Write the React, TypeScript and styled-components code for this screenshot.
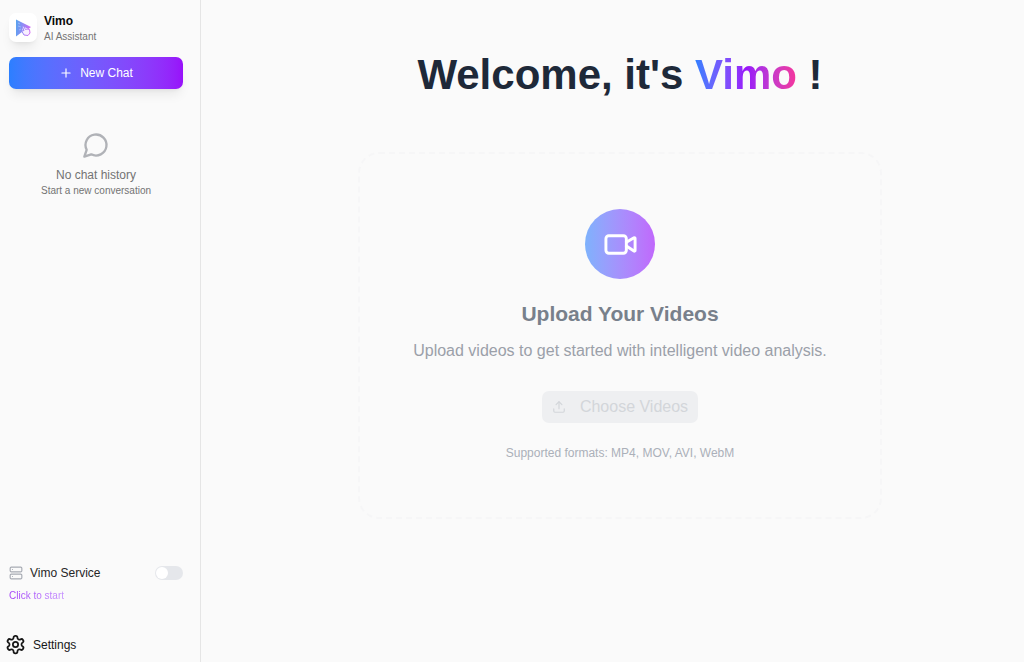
import React, { useState } from "react";
import styled, { createGlobalStyle } from "styled-components";
import { Plus, Server, Upload, Video } from "lucide-react";

const GlobalStyle = createGlobalStyle`
  * { box-sizing: border-box; }
  body {
    margin: 0;
    background: #fafafa;
    color: #0a0a0a;
    font-family: "Liberation Sans", Arial, sans-serif;
    font-size: 12px;
    line-height: 16px;
  }
  button { font: inherit; border: 0; cursor: pointer; }
  h1, h2, p { margin: 0; }
`;

const Shell = styled.div`
  display: flex;
  min-height: 100vh;
`;

const Sidebar = styled.aside`
  display: flex;
  flex-direction: column;
  flex: 0 0 201px;
  padding: 13px 17px 7px 9px;
  border-right: 1px solid #e5e5e5;
`;

const Brand = styled.div`
  display: flex;
  align-items: flex-start;
  gap: 7px;
`;

const LogoTile = styled.div`
  display: grid;
  place-items: center;
  width: 28px;
  height: 29px;
  border-radius: 7px;
  background: #fff;
  box-shadow: 0 8px 12px -3px rgba(0, 0, 0, 0.08), 0 3px 5px -3px rgba(0, 0, 0, 0.08);
`;

const BrandName = styled.p`
  font-weight: 700;
`;

const Caption = styled.p`
  color: #737373;
  font-size: 10px;
`;

const NewChatButton = styled.button`
  display: flex;
  align-items: center;
  justify-content: center;
  gap: 7px;
  height: 32px;
  margin-top: 12px;
  border-radius: 7px;
  color: #fff;
  background: linear-gradient(to right in oklab, #2b7fff, #9810fa);
  box-shadow: 0 8px 12px -3px rgba(0, 0, 0, 0.08), 0 3px 5px -3px rgba(0, 0, 0, 0.08);
`;

const EmptyHistory = styled.div`
  display: flex;
  flex: 1;
  flex-direction: column;
  align-items: center;
  padding-top: 42px;
  color: #737373;

  svg { margin-bottom: 8px; color: #b0b2b7; }
`;

const ServiceRow = styled.div`
  display: flex;
  align-items: center;
  gap: 7px;
  height: 20px;

  svg { color: #a7abb3; }
`;

const ServiceLabel = styled.label`
  flex: 1;
  color: #262626;
`;

const Toggle = styled.input`
  appearance: none;
  width: 28px;
  height: 14px;
  margin: 0;
  padding: 1px;
  border-radius: 7px;
  background: #e5e7eb;
  cursor: pointer;

  &::before {
    content: "";
    display: block;
    width: 12px;
    height: 12px;
    border-radius: 50%;
    background: #fff;
  }
  &:checked { background: #9810fa; }
  &:checked::before { margin-left: 14px; }
`;

const StartLink = styled.button`
  align-self: flex-start;
  margin-top: 6px;
  padding: 0;
  font-size: 10px;
  line-height: 14px;
  color: transparent;
  background: linear-gradient(to right, #a03cf7, #c794ff);
  background-clip: text;
`;

const SettingsButton = styled.button`
  display: flex;
  align-items: center;
  align-self: flex-start;
  gap: 7px;
  margin: 31px 0 0 -4px;
  padding: 0;
  color: #171717;
  background: none;
`;

const Main = styled.main`
  display: flex;
  flex: 1;
  flex-direction: column;
  align-items: center;
  gap: 51px;
  padding: 49px 16px 40px 31px;
`;

const Title = styled.h1`
  color: #1e2939;
  font-size: 42px;
  line-height: 52px;
`;

const TitleAccent = styled.span`
  color: transparent;
  background: linear-gradient(to right in oklab, #2b7fff, #9810fa, #f6339a);
  background-clip: text;
`;

const DropZone = styled.section`
  display: flex;
  flex-direction: column;
  align-items: center;
  width: 100%;
  max-width: 524px;
  padding: 55px 40px;
  border: 2px dashed #f6f6f7;
  border-radius: 21px;
  text-align: center;
`;

const VideoBadge = styled.div`
  display: grid;
  place-items: center;
  width: 70px;
  height: 70px;
  border-radius: 50%;
  color: #fff;
  background: linear-gradient(to right in oklab, #7db2fc, #c068fc);
`;

const UploadTitle = styled.h2`
  margin-top: 21px;
  color: #78808b;
  font-size: 21px;
  line-height: 28px;
`;

const UploadText = styled.p`
  margin-top: 11px;
  color: #9ba0a9;
  font-size: 16px;
  line-height: 24px;
`;

const ChooseButton = styled.button`
  display: flex;
  align-items: center;
  gap: 14px;
  height: 32px;
  margin-top: 28px;
  padding: 0 10px;
  border-radius: 7px;
  color: #d3d6da;
  background: #eeeff1;
  font-size: 16px;
`;

const Formats = styled.p`
  margin-top: 21px;
  color: #abb0b9;
  line-height: 18px;
`;

const StrokeIcon = styled.svg`
  fill: none;
  stroke: currentColor;
  stroke-width: 2;
  stroke-linecap: round;
  stroke-linejoin: round;
`;

function ChatIcon() {
  return (
    <StrokeIcon width="28" height="28" viewBox="0 0 24 24" aria-hidden="true">
      <path d="M7.9 20A9 9 0 1 0 4 16.1L2 22Z" />
    </StrokeIcon>
  );
}

function GearIcon() {
  return (
    <StrokeIcon width="21" height="21" viewBox="0 0 24 24" aria-hidden="true">
      <path d="M12.22 2h-.44a2 2 0 0 0-2 2v.18a2 2 0 0 1-1 1.73l-.43.25a2 2 0 0 1-2 0l-.15-.08a2 2 0 0 0-2.73.73l-.22.38a2 2 0 0 0 .73 2.73l.15.1a2 2 0 0 1 1 1.72v.51a2 2 0 0 1-1 1.74l-.15.09a2 2 0 0 0-.73 2.73l.22.38a2 2 0 0 0 2.73.73l.15-.08a2 2 0 0 1 2 0l.43.25a2 2 0 0 1 1 1.73V20a2 2 0 0 0 2 2h.44a2 2 0 0 0 2-2v-.18a2 2 0 0 1 1-1.73l.43-.25a2 2 0 0 1 2 0l.15.08a2 2 0 0 0 2.73-.73l.22-.39a2 2 0 0 0-.73-2.73l-.15-.08a2 2 0 0 1-1-1.74v-.5a2 2 0 0 1 1-1.74l.15-.09a2 2 0 0 0 .73-2.73l-.22-.38a2 2 0 0 0-2.73-.73l-.15.08a2 2 0 0 1-2 0l-.43-.25a2 2 0 0 1-1-1.73V4a2 2 0 0 0-2-2z" />
      <circle cx="12" cy="12" r="3" />
    </StrokeIcon>
  );
}

function VimoLogo() {
  return (
    <svg width="18" height="20" viewBox="0 0 18 20" fill="none" aria-hidden="true">
      <defs>
        <linearGradient id="vimo-logo" x1="1" y1="9" x2="17" y2="11" gradientUnits="userSpaceOnUse">
          <stop stopColor="#55a5ee" />
          <stop offset="0.45" stopColor="#8d8cf5" />
          <stop offset="1" stopColor="#d568f3" />
        </linearGradient>
      </defs>
      <path d="M2 1.5 17 9 14.5 11 9 8.5 8 14 2 18.5Z" fill="url(#vimo-logo)" />
      <path
        d="m8 8 2 4.5-2.3.5 2.3 4 4 .5 2-2.5-.5-3.5-2.5-.5-1.5.5L9.500 8Z"
        stroke="url(#vimo-logo)"
        strokeWidth="1"
        fill="#f8efff"
      />
      <path d="m4 5 2 1M4 8l3 1M5 12l2-1" stroke="#a5cdfb" strokeWidth="0.7" />
    </svg>
  );
}

export default function App() {
  const [running, setRunning] = useState(false);

  return (
    <>
      <GlobalStyle />
      <Shell>
        <Sidebar>
          <Brand>
            <LogoTile><VimoLogo /></LogoTile>
            <div>
              <BrandName>Vimo</BrandName>
              <Caption>AI Assistant</Caption>
            </div>
          </Brand>
          <NewChatButton type="button">
            <Plus size={14} />
            New Chat
          </NewChatButton>
          <EmptyHistory>
            <ChatIcon />
            <p>No chat history</p>
            <Caption>Start a new conversation</Caption>
          </EmptyHistory>
          <ServiceRow>
            <Server size={14} />
            <ServiceLabel htmlFor="service">Vimo Service</ServiceLabel>
            <Toggle
              id="service"
              type="checkbox"
              role="switch"
              checked={running}
              onChange={(event) => setRunning(event.target.checked)}
            />
          </ServiceRow>
          <StartLink type="button" onClick={() => setRunning(true)}>Click to start</StartLink>
          <SettingsButton type="button">
            <GearIcon />
            Settings
          </SettingsButton>
        </Sidebar>
        <Main>
          <Title>Welcome, it's <TitleAccent>Vimo</TitleAccent> !</Title>
          <DropZone>
            <VideoBadge><Video size={35} /></VideoBadge>
            <UploadTitle>Upload Your Videos</UploadTitle>
            <UploadText>Upload videos to get started with intelligent video analysis.</UploadText>
            <ChooseButton type="button" disabled>
              <Upload size={14} />
              Choose Videos
            </ChooseButton>
            <Formats>Supported formats: MP4, MOV, AVI, WebM</Formats>
          </DropZone>
        </Main>
      </Shell>
    </>
  );
}
